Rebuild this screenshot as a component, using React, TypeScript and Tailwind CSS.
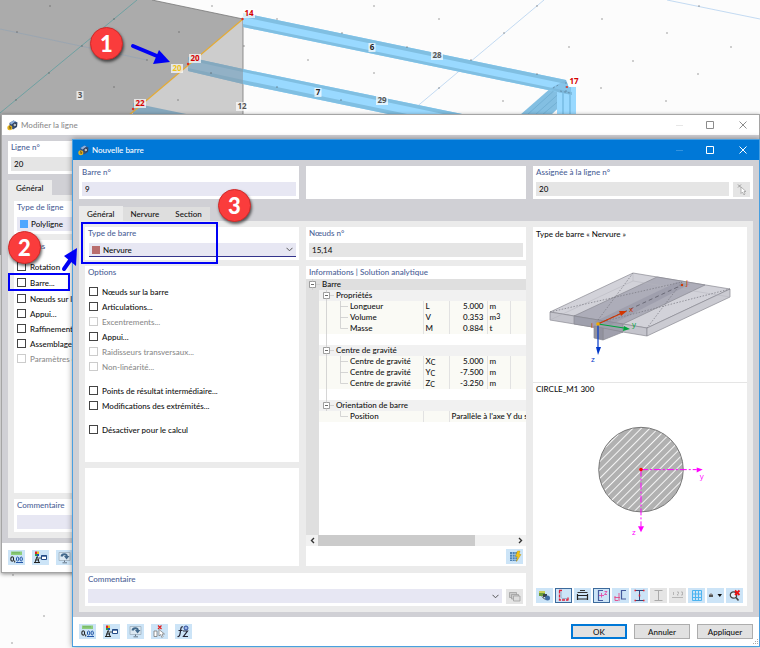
import type { ReactNode } from 'react';
import clsx from 'clsx';

const GRID_DOTS = [
  [50, 6], [114, 19], [17, 32], [179, 32], [82, 46], [147, 60], [49, 73], [211, 73], [114, 87], [16, 100],
  [178, 100], [212, 6], [277, 19], [342, 33], [244, 46], [308, 60], [277, 87], [341, 100], [374, 6], [374, 73],
  [439, 19], [537, 6], [504, 33], [407, 47], [569, 47], [471, 60], [537, 74], [439, 88], [503, 101], [601, 88],
  [666, 101], [602, 19], [633, 61], [667, 33], [731, 47], [698, 74], [699, 6], [13, 575], [44, 616], [12, 643],
];

const MODEL_TAGS = [
  { x: 372, y: 47, text: '6', color: '#222222' },
  { x: 437, y: 55, text: '28', color: '#555555' },
  { x: 318, y: 92, text: '7', color: '#222222' },
  { x: 382, y: 100, text: '29', color: '#555555' },
  { x: 80, y: 95, text: '3', color: '#555555' },
  { x: 242, y: 106, text: '12', color: '#555555' },
  { x: 177, y: 68, text: '20', color: '#f0c419' },
  { x: 249, y: 13, text: '14', color: '#d40000' },
  { x: 195, y: 58, text: '20', color: '#d40000' },
  { x: 140, y: 103, text: '22', color: '#d40000' },
  { x: 574, y: 81, text: '17', color: '#d40000' },
];

function ModelView() {
  return (
    <svg className="absolute left-0 top-0" width="760" height="648" viewBox="0 0 760 648">
      <path d="M0 0H152L243 19L129 115L2 255H0Z" fill="#ababab" />
      <path d="M243 19V116H128Z" fill="#cdcdcd" />
      <path d="M0 29L147 60" stroke="#93a3b3" strokeWidth="0.7" />
      <path d="M137 0L0 113" stroke="#5f9ea0" strokeWidth="0.8" />
      <path d="M544 0L408 114M667 0L760 19" stroke="#bcd6f0" strokeWidth="0.9" />
      <path d="M152 0L243 19V115" fill="none" stroke="#777" strokeWidth="0.8" />
      <path d="M560 80L520 115H551L572 95Z" fill="#83bfe2" />
      <path d="M558 87L527 115M564 89L535 115M568 93L542 115" stroke="#6aa9cf" strokeWidth="0.7" />
      <path d="M557 87H576V115H557Z" fill="#99d9ff" />
      <path d="M563 87V115M570 87V115" stroke="#74b9e2" strokeWidth="1.4" />
      <path d="M243 13L566 80L572 95L243 27Z" fill="#99d9ff" />
      <path d="M243 13L566 80V84L243 17ZM243 24L572 92V95L243 27Z" fill="#80bfe2" />
      <path d="M551 88L566 80L572 95L558 92" fill="#79b6da" fillOpacity="0.6" />
      <path d="M553 88L560 84M566 82V94M560 91L570 93" stroke="#5a7f99" strokeWidth="0.7" strokeDasharray="2 2" />
      <path d="M188 57L243 69V84L188 71Z" fill="#92b1c6" />
      <path d="M188 57L243 69V72L188 60ZM188 68L243 80V84L188 71Z" fill="#84a9bf" />
      <path d="M243 69L467 115H393L243 84Z" fill="#99d9ff" />
      <path d="M243 69L467 115H448L243 72ZM243 80L412 115H393L243 84Z" fill="#80bfe2" />
      <path d="M133 103L191 115H133Z" fill="#86a8bd" />
      <path d="M243 19L128 116" stroke="#e3aa35" strokeWidth="1.2" />
      {GRID_DOTS.map(([x, y]) => (
        <rect key={`${x}-${y}`} x={x - 0.5} y={y - 0.5} width="1" height="1" fill="#444" />
      ))}
      <g fill="#e03020">
        <circle cx="242.500" cy="19" r="1.200" />
        <circle cx="188" cy="64" r="1.200" />
        <circle cx="133" cy="109" r="1.200" />
        <circle cx="567" cy="87" r="1" />
      </g>
      {MODEL_TAGS.map((tag) => (
        <g key={`${tag.text}-${tag.x}`}>
          <rect
            x={tag.x - tag.text.length * 2.5 - 1}
            y={tag.y - 4}
            width={tag.text.length * 5 + 2}
            height="9"
            fill="#ffffff"
            fillOpacity="0.7"
          />
          <text
            x={tag.x}
            y={tag.y + 3}
            textAnchor="middle"
            fontSize="8"
            fontWeight="700"
            fontFamily="'Open Sans', sans-serif"
            fill={tag.color}
          >
            {tag.text}
          </text>
        </g>
      ))}
    </svg>
  );
}

function AppIcon() {
  return (
    <svg className="size-[11px] shrink-0" viewBox="0 0 11 11">
      <path d="M2.500 3L6.500 0.500L10.500 2.500L10 7L6 9.500L2.500 7Z" fill="#35507c" />
      <path d="M2.500 3L6.500 0.500L8.500 1.500L4.500 4.500Z" fill="#8fb0dc" />
      <circle cx="7.800" cy="5" r="1.800" fill="#b7bfca" stroke="#222d40" strokeWidth="0.800" />
      <circle cx="2.800" cy="7.800" r="2.500" fill="#e3b322" />
      <path d="M2 6.500L3.500 6M1.800 8L3.800 7.500L3 9" stroke="#59430b" strokeWidth="0.7" fill="none" />
    </svg>
  );
}

function TitleBar({ title, active = false }: { title: string; active?: boolean }) {
  return (
    <div
      className={clsx(
        'flex h-5 shrink-0 items-center gap-[3px] pl-[5px]',
        active ? 'bg-[#0078d7] text-white' : 'bg-white text-[#8c8c8c]',
      )}
    >
      <AppIcon />
      <h2 className="flex-1 text-[8px]">{title}</h2>
      <button type="button" aria-label="Réduire" className="flex h-5 w-8 items-center justify-center opacity-20">
        <svg width="7" height="7" viewBox="0 0 7 7" stroke="currentColor"><path d="M0 3.500H7" /></svg>
      </button>
      <button type="button" aria-label="Agrandir" className="-ml-1 flex h-5 w-8 items-center justify-center">
        <svg width="8" height="8" viewBox="0 0 8 8" fill="none" stroke="currentColor"><path d="M0.500 0.500H7.500V7.500H0.500Z" /></svg>
      </button>
      <button type="button" aria-label="Fermer" className="-ml-0.5 flex h-5 w-8 items-center justify-center">
        <svg width="8" height="8" viewBox="0 0 8 8" fill="none" stroke="currentColor"><path d="M0.500 0.500L7.500 7.500M7.500 0.500L0.500 7.500" /></svg>
      </button>
    </div>
  );
}

function Group({ label, htmlFor, className, children }: { label?: string; htmlFor?: string; className?: string; children?: ReactNode }) {
  return (
    <div className={clsx('bg-white px-[3px] pb-[3px] pt-px', className)}>
      {label && (
        <label htmlFor={htmlFor} className="mb-[3px] block h-3 leading-[11px] text-[#4c6297]">
          {label}
        </label>
      )}
      {children}
    </div>
  );
}

function Field({ id, value, readOnly = false }: { id: string; value: string; readOnly?: boolean }) {
  return (
    <input
      id={id}
      type="text"
      defaultValue={value}
      readOnly={readOnly}
      className={clsx('block h-[14px] w-full min-w-0 px-[3px] outline-none', readOnly ? 'bg-[#e5e5e5]' : 'bg-[#e7e7f3]')}
    />
  );
}

function Dropdown({ id, value, swatch, underline = false }: { id: string; value: string; swatch?: string; underline?: boolean }) {
  return (
    <div className={clsx('flex h-[14px] min-w-0 flex-1 items-center bg-[#e7e7f3] px-[3px]', underline && 'border-b border-[#33338c]')}>
      {swatch && <span className={clsx('mr-[3px] size-2 shrink-0', swatch)} />}
      <select id={id} defaultValue={value} className="h-full min-w-0 flex-1 appearance-none bg-transparent outline-none">
        <option value={value}>{value}</option>
      </select>
      <svg width="7" height="5" viewBox="0 0 7 5" fill="none" stroke="#555"><path d="M0.500 0.800L3.500 3.800L6.500 0.800" /></svg>
    </div>
  );
}

function Check({ label, disabled = false, className }: { label: string; disabled?: boolean; className?: string }) {
  return (
    <label className={clsx('flex h-[15px] items-center gap-1 whitespace-nowrap', disabled && 'text-[#8c8c8c]', className)}>
      <input
        type="checkbox"
        disabled={disabled}
        className="size-[9px] shrink-0 appearance-none border border-[#444] bg-white checked:bg-[#33338c] disabled:border-[#ccc]"
      />
      {label}
    </label>
  );
}

function Tab({ label, selected = false }: { label: string; selected?: boolean }) {
  return (
    <button
      type="button"
      role="tab"
      aria-selected={selected}
      className={clsx('px-2 leading-none', selected ? 'h-[15px] bg-[#ebebeb]' : 'h-[14px] bg-[#dedede]')}
    >
      {label}
    </button>
  );
}

type IconState = 'normal' | 'selected' | 'disabled';

function IconButton({ label, state = 'normal', children }: { label: string; state?: IconState; children: ReactNode }) {
  return (
    <button
      type="button"
      aria-label={label}
      disabled={state === 'disabled'}
      className={clsx(
        'flex h-[15px] w-[17px] shrink-0 items-center justify-center',
        state === 'normal' && 'bg-[#cce4f7]',
        state === 'selected' && 'border border-[#3c6a9c] bg-[#cce4f7]',
        state === 'disabled' && 'bg-[#e5e5e5]',
      )}
    >
      <svg className="h-[13px] w-[15px] shrink-0" viewBox="0 0 15 13" fill="none">
        {children}
      </svg>
    </button>
  );
}

function DialogTools() {
  return (
    <>
      <IconButton label="Unités et décimales">
        <path d="M2 0.500H13V4H2Z" fill="#8fce7c" />
        <path d="M4 1V2.500M6 1V2.500M8 1V2.500M10 1V2.500" stroke="#4a8f3c" strokeWidth="0.6" />
        <ellipse cx="3.200" cy="8" rx="1.400" ry="2.200" stroke="#222" strokeWidth="1.100" />
        <path d="M5.700 9.500V11.500" stroke="#222" />
        <ellipse cx="8.600" cy="8" rx="1.200" ry="2" stroke="#2456a8" />
        <ellipse cx="12.200" cy="8" rx="1.200" ry="2" stroke="#2456a8" />
        <path d="M7 11.500H14" stroke="#2456a8" />
      </IconButton>
      <IconButton label="Propriétés d'affichage">
        <path d="M2 0.500H4V3H2Z" fill="#e02020" />
        <path d="M4 0.500H6V3H4Z" fill="#e8c020" />
        <path d="M2 3H4V5H2Z" fill="#2a9c3c" />
        <path d="M4 3H6V5H4Z" fill="#2050c0" />
        <path d="M4 5.500L2 11.500M4.500 5.500L6 11.500M2.500 9H6M1 11.500H7" stroke="#222" />
        <path d="M8.500 4.500H13.500V8.500H8.500Z" fill="#fff" stroke="#234a86" />
        <path d="M8.500 5H13.500" stroke="#234a86" strokeWidth="1.400" />
        <path d="M6 7H8" stroke="#222" strokeWidth="0.800" />
      </IconButton>
      <IconButton label="Rotation de la vue">
        <path d="M2 1.500H13V9.500H2Z" fill="#dbe8f2" stroke="#9fb0be" strokeWidth="0.800" />
        <path d="M4.500 5.500C5 2.500 9.500 2.500 9.800 5" stroke="#42698c" strokeWidth="2" />
        <path d="M7 5H12.500L9.500 8.500Z" fill="#42698c" />
        <path d="M7.500 9.500V11M5.500 11.800H10" stroke="#667788" />
      </IconButton>
    </>
  );
}

function TreeToggle({ text }: { text: string }) {
  return (
    <>
      <svg className="mr-[2px] size-[11px] shrink-0" viewBox="0 0 11 11" fill="none" stroke="#888" strokeWidth="0.800">
        <path d="M0.500 2.500H6.500V8.500H0.500Z" fill="#fff" />
        <path d="M2 5.500H5" stroke="#444" />
        <path d="M7 5.500H11M3.500 0V2.500M3.500 8.500V11" stroke="#ccc" />
      </svg>
      {text}
    </>
  );
}

type Row = { name: string; symbol?: string; sub?: string; value: string; unit?: string; exp?: string };

const SECTIONS: { title: string; rows: Row[] }[] = [
  {
    title: 'Propriétés',
    rows: [
      { name: 'Longueur', symbol: 'L', value: '5.000', unit: 'm' },
      { name: 'Volume', symbol: 'V', value: '0.353', unit: 'm', exp: '3' },
      { name: 'Masse', symbol: 'M', value: '0.884', unit: 't' },
    ],
  },
  {
    title: 'Centre de gravité',
    rows: [
      { name: 'Centre de gravité', symbol: 'X', sub: 'C', value: '5.000', unit: 'm' },
      { name: 'Centre de gravité', symbol: 'Y', sub: 'C', value: '-7.500', unit: 'm' },
      { name: 'Centre de gravité', symbol: 'Z', sub: 'C', value: '-3.250', unit: 'm' },
    ],
  },
  { title: 'Orientation de barre', rows: [{ name: 'Position', value: "Parallèle à l'axe Y du système" }] },
];

function SectionRows({ title, rows, last }: { title: string; rows: Row[]; last: boolean }) {
  return (
    <tbody>
      <tr className="h-[11px] bg-[#f1f1f1]">
        <td className="bg-[#dfdfdf] p-0" />
        <th colSpan={5} scope="rowgroup" className="p-0 text-left font-medium">
          <div className="flex h-[11px] items-center pl-1"><TreeToggle text={title} /></div>
        </th>
      </tr>
      {rows.map((row, i) => (
        <tr key={`${row.name}-${i}`} className="h-[11px] bg-[#fafaf5]">
          <td className="bg-[#dfdfdf] p-0" />
          <th scope="row" className="p-0 text-left font-medium">
            <div className="flex h-[11px] items-center whitespace-nowrap">
              <svg className="mr-px h-[11px] w-[30px] shrink-0" viewBox="0 0 30 11" stroke="#ccc" strokeWidth="0.800">
                {!last && <path d="M7.500 0V11" />}
                <path d="M21.500 0V5.500H29" fill="none" />
                {i < rows.length - 1 && <path d="M21.500 5V11" />}
              </svg>
              {row.name}
            </div>
          </th>
          <td className="border-l border-[#e2e2e2] p-0 pl-0.5">
            <div className="flex h-[11px] items-center">
              {row.symbol}
              {row.sub && <span className="self-end text-[7px] leading-[9px]">{row.sub}</span>}
            </div>
          </td>
          {row.unit ? (
            <>
              <td className="border-l border-[#e2e2e2] p-0 pr-[3px] text-right">{row.value}</td>
              <td className="border-l border-[#e2e2e2] p-0 pl-0.5">
                <div className="flex h-[11px] items-center">
                  {row.unit}
                  {row.exp && <span className="self-start text-[7px] leading-[8px]">{row.exp}</span>}
                </div>
              </td>
              <td className="border-l border-[#e2e2e2] p-0" />
            </>
          ) : (
            <td colSpan={3} className="overflow-hidden whitespace-nowrap border-l border-[#e2e2e2] p-0 pl-0.5">{row.value}</td>
          )}
        </tr>
      ))}
      {!last && (
        <tr className="h-[11px]">
          <td className="bg-[#dfdfdf] p-0" />
          <td colSpan={5} className="p-0">
            <svg className="block h-[11px] w-[30px]" viewBox="0 0 30 11" stroke="#ccc" strokeWidth="0.800"><path d="M7.500 0V11" /></svg>
          </td>
        </tr>
      )}
    </tbody>
  );
}

function InfoPanel() {
  return (
    <div className="flex min-h-0 flex-1 flex-col bg-white">
      <h3 className="h-[13px] shrink-0 px-[3px] pt-px leading-[11px] text-[#4c6297]">Informations | Solution analytique</h3>
      <div className="flex min-h-0 flex-1 flex-col overflow-hidden">
        <table className="w-full table-fixed border-collapse leading-[11px]">
          <colgroup>
            <col className="w-[13px]" />
            <col className="w-[104px]" />
            <col className="w-[26px]" />
            <col className="w-[38px]" />
            <col className="w-[23px]" />
            <col />
          </colgroup>
          <thead>
            <tr className="h-[11px] bg-[#dfdfdf]">
              <th colSpan={6} scope="colgroup" className="p-0 text-left font-medium">
                <div className="flex h-[11px] items-center pl-[3px]"><TreeToggle text="Barre" /></div>
              </th>
            </tr>
          </thead>
          {SECTIONS.map((section, i) => (
            <SectionRows key={section.title} title={section.title} rows={section.rows} last={i === SECTIONS.length - 1} />
          ))}
        </table>
        <div className="w-[13px] flex-1 bg-[#dfdfdf]" />
      </div>
      <div className="flex h-[11px] shrink-0 items-stretch bg-[#f1f1f1]">
        <button type="button" aria-label="Défiler à gauche" className="flex w-3 items-center justify-center">
          <svg width="5" height="7" viewBox="0 0 5 7" fill="none" stroke="#333" strokeWidth="1.400"><path d="M4 1L1.500 3.500L4 6" /></svg>
        </button>
        <div className="flex flex-1"><div className="w-4/5 bg-[#cbcbcb]" /></div>
        <button type="button" aria-label="Défiler à droite" className="flex w-3 items-center justify-center">
          <svg width="5" height="7" viewBox="0 0 5 7" fill="none" stroke="#333" strokeWidth="1.400"><path d="M1 1L3.500 3.500L1 6" /></svg>
        </button>
      </div>
      <div className="flex h-5 shrink-0 items-center justify-end px-[3px]">
        <IconButton label="Calculer">
          <path d="M3 2H10V11H3Z" fill="#4f83b5" />
          <path d="M3 4.500H12M3 7H12M3 9.500H10M5.500 2V11.500M8 2V11.500" stroke="#a9cbe8" strokeWidth="0.700" />
          <path d="M10.500 1H13L12 4.500H14L9.500 11.500L10.500 6.500H8.500Z" fill="#f5c518" stroke="#b88a00" strokeWidth="0.400" />
        </IconButton>
      </div>
    </div>
  );
}

function RibDrawing() {
  return (
    <svg className="block h-[142px] w-full shrink-0" viewBox="533 240 214 142" fontFamily="'Open Sans', sans-serif">
      <g stroke="#8a8a92" strokeWidth="0.700" strokeLinejoin="round">
        <path d="M550 312L633 273L730 289L647 328Z" fill="#d2d2d9" />
        <path d="M550 312V320L647 336V328Z" fill="#c4c4cc" />
        <path d="M647 328L730 289V297L647 336Z" fill="#cbcbd2" />
        <path d="M574 316L657 277L705 285L623 324Z" fill="#adadb9" />
        <path d="M574 316V324L623 332V324Z" fill="#9fa0ad" />
        <path d="M603 328L623 332L603 340Z" fill="#a0a0ad" />
        <path d="M594 326L603 328V340L594 338Z" fill="#92929f" />
      </g>
      <path d="M633 273V281L550 320M633 281L730 297" fill="none" stroke="#b4b4bc" strokeWidth="0.500" />
      <path d="M594 322L677 282L690 284L611 325Z" fill="#8f8f9f" fillOpacity="0.45" />
      <path d="M550 312L682 282M598 320L633 273M682 282L647 328M598 323L730 289" fill="none" stroke="#777780" strokeWidth="0.700" strokeDasharray="1.500 1.500" />
      <path d="M598 324L682 285" stroke="#5c5c68" strokeWidth="0.800" strokeDasharray="4 3" />
      <path d="M598 324L622 313" stroke="#d23600" strokeWidth="1.200" />
      <path d="M627 311L621 316L619 311Z" fill="#d23600" />
      <path d="M598 324L624 328" stroke="#00a33c" strokeWidth="1.200" />
      <path d="M630 329L623 331L624 326Z" fill="#00a33c" />
      <path d="M598 324V349" stroke="#0037c8" strokeWidth="1.200" />
      <path d="M598 355L596 347H601Z" fill="#0037c8" />
      <circle cx="598" cy="324" r="1.800" fill="#f2a900" />
      <circle cx="682" cy="285" r="1.200" fill="#d23600" />
      <g fontSize="8" fontWeight="500">
        <text x="629" y="312" fill="#d23600">x</text>
        <text x="632" y="327" fill="#00a33c">y</text>
        <text x="591" y="362" fill="#0037c8">z</text>
        <text x="591" y="328" fill="#d23600">i</text>
        <text x="686" y="285" fill="#d23600">j</text>
      </g>
    </svg>
  );
}

function CircleDrawing() {
  return (
    <svg className="block min-h-0 w-full flex-1" viewBox="533 395 214 194" fontFamily="'Open Sans', sans-serif">
      <defs>
        <pattern id="hatch" width="6" height="6" patternUnits="userSpaceOnUse" patternTransform="rotate(45)">
          <rect width="6" height="6" fill="#b1b1b1" />
          <rect width="1" height="6" fill="#f6f6f6" />
        </pattern>
      </defs>
      <circle cx="641" cy="470" r="42.500" fill="url(#hatch)" stroke="#777" />
      <path d="M641 470H697M641 470V527" stroke="#ff00ff" strokeDasharray="7 2 2 2" />
      <path d="M703 470L697 473V468Z" fill="#ff00ff" />
      <path d="M641 533L638 527H644Z" fill="#ff00ff" />
      <circle cx="641" cy="470" r="1.800" fill="#ff0000" />
      <text x="700" y="479" fontSize="8" fill="#ff00ff">y</text>
      <text x="632" y="536" fontSize="8" fill="#ff00ff">z</text>
    </svg>
  );
}

function SectionTools() {
  return (
    <div className="mb-[3px] flex shrink-0 gap-0.5 pl-[3px]">
      <IconButton label="Éléments visibles">
        <path d="M2 2H8V7H2Z" fill="#6b9e3c" />
        <path d="M2 2H8V4H2Z" fill="#c9cf5a" />
        <path d="M6 5H10V8H6Z" fill="#39464f" />
        <circle cx="10.500" cy="9" r="2.500" fill="#3f6fa8" />
        <path d="M5 7.500L8 10.500" stroke="#333" />
      </IconButton>
      <IconButton label="Contour" state="selected">
        <path d="M3.500 1.500V11H12M3 1.500H6.500M12 11.500V8" stroke="#e0203a" strokeDasharray="3 1" strokeWidth="1.300" />
        <path d="M5 3V7.500C5 9 6 9.500 7 9.500H11" stroke="#7788aa" strokeWidth="0.600" />
      </IconButton>
      <IconButton label="Cotes">
        <path d="M2.500 3.500H12.500M5 1.500H10" stroke="#333" />
        <path d="M2.500 5V11M12.500 5V11M2.500 10H12.500M2.500 6.500H12.500" stroke="#222" strokeWidth="1.200" />
      </IconButton>
      <IconButton label="Axes principaux" state="selected">
        <path d="M9 1.500H4.500V11.500H9" stroke="#445a9c" strokeWidth="1.200" />
        <path d="M5 6.500H10M7.500 4V8.500M10.500 2.500H13L10.500 5.500H13" stroke="#e24aa8" strokeWidth="0.900" />
      </IconButton>
      <IconButton label="Centre de cisaillement">
        <path d="M13 1.500H8.500V10H13" stroke="#445a9c" strokeWidth="1.200" />
        <path d="M6 4V12M1.500 8.500H7M2 7V11.500H5" stroke="#e24a88" strokeWidth="0.900" />
      </IconButton>
      <IconButton label="Points de contrainte">
        <path d="M3 1.500H12M3 11.500H12M7.500 1.500V11.500" stroke="#334a7c" />
        <path d="M2.500 1.500H4M11 1.500H12.500M2.500 11.500H4M11 11.500H12.500M7.500 5.500V7.500" stroke="#e02030" strokeWidth="1.500" />
      </IconButton>
      <IconButton label="Parties de section" state="disabled">
        <path d="M3.500 1.500H11.500M3.500 11.500H11.500M7.500 1.500V11.500" stroke="#aaa" />
      </IconButton>
      <IconButton label="Numérotation" state="disabled">
        <path d="M3.500 3V6M7 3H8.500V4.500L7 6H8.500M11 3H12.500V6H11M2 8.500H13" stroke="#aaa" strokeWidth="0.800" />
      </IconButton>
      <IconButton label="Grille">
        <path d="M3.500 1.500H12.500V11.500H3.500ZM6.500 1.500V11.500M9.500 1.500V11.500M3.500 5H12.500M3.500 8.500H12.500" stroke="#4db4f0" />
      </IconButton>
      <IconButton label="Imprimer">
        <path d="M1 5.500H5V8H1Z" fill="#555" />
        <path d="M2 4.500H4V6H2Z" fill="#888" />
        <path d="M9.500 5H14L11.800 8Z" fill="#111" />
      </IconButton>
      <IconButton label="Réinitialiser le zoom">
        <circle cx="6.500" cy="6" r="3.200" fill="#e5f1fa" stroke="#444" strokeWidth="1.200" />
        <path d="M9 8.500L11.500 11.500" stroke="#444" strokeWidth="1.600" />
        <path d="M8 1.500L12.500 6M12.500 1.500L8 6" stroke="#ee1111" strokeWidth="1.800" />
      </IconButton>
    </div>
  );
}

function LineDialog() {
  return (
    <section aria-label="Modifier la ligne" className="absolute left-px right-0 top-[114px] flex h-[459px] flex-col border border-[#a5a5a5] bg-white shadow-[0_1px_4px_rgba(0,0,0,0.45)]">
      <TitleBar title="Modifier la ligne" />
      <div className="flex min-h-0 flex-1 flex-col bg-[#d0d0d5] px-1.5 pb-[5px] pt-1.5">
        <Group label="Ligne n°" htmlFor="line-no"><Field id="line-no" value="20" readOnly /></Group>
        <div role="tablist" className="mt-1.5 flex items-end"><Tab label="Général" selected /></div>
        <div className="flex min-h-0 flex-1 flex-col gap-1.5 bg-[#ebebeb] p-1.5">
          <Group label="Type de ligne" htmlFor="line-type">
            <Dropdown id="line-type" value="Polyligne" swatch="bg-[#4da6ff]" />
          </Group>
          <Group label="Options" className="min-h-0 flex-1">
            <div className="pt-[3px]">
              <Check label="Rotation" />
              <Check label="Barre..." className="my-px" />
              <Check label="Nœuds sur la ligne" />
              <Check label="Appui..." />
              <Check label="Raffinement..." />
              <Check label="Assemblage..." />
              <Check label="Paramètres de ligne" disabled />
            </div>
          </Group>
          <Group label="Commentaire" htmlFor="line-comment"><Field id="line-comment" value="" /></Group>
        </div>
      </div>
      <div className="flex h-[29px] shrink-0 items-center gap-[7px] px-1.5"><DialogTools /></div>
    </section>
  );
}

function MemberDialog() {
  return (
    <section aria-label="Nouvelle barre" className="absolute bottom-px left-[72px] right-0 top-[139px] flex flex-col border border-[#4a9fe0] bg-white shadow-[0_0_6px_rgba(0,0,0,0.4)]">
      <TitleBar title="Nouvelle barre" active />
      <div className="flex min-h-0 flex-1 flex-col bg-[#d0d0d5] px-1.5 pb-[5px] pt-1.5">
        <div className="grid shrink-0 grid-cols-3 gap-[7px]">
          <Group label="Barre n°" htmlFor="member-no"><Field id="member-no" value="9" /></Group>
          <Group />
          <Group label="Assignée à la ligne n°" htmlFor="assigned-line">
            <div className="flex h-[14px] items-center gap-1">
              <Field id="assigned-line" value="20" readOnly />
              <IconButton label="Sélectionner la ligne" state="disabled">
                <path d="M4 1.500L7 4.500M7 1.500L4 4.500" stroke="#999" />
                <path d="M7 4V10.500L8.500 9L10 12L11 11L10 8.500H12Z" fill="#fff" stroke="#999" strokeWidth="0.700" />
              </IconButton>
            </div>
          </Group>
        </div>
        <div role="tablist" className="mt-[7px] flex shrink-0 items-end">
          <Tab label="Général" selected />
          <Tab label="Nervure" />
          <Tab label="Section" />
        </div>
        <div className="grid min-h-0 flex-1 grid-cols-[107fr_110fr_107fr] grid-rows-[minmax(0,1fr)_auto] gap-[7px] bg-[#ebebeb] p-1.5">
          <div className="flex min-h-0 flex-col gap-1.5">
            <Group label="Type de barre" htmlFor="member-type">
              <div className="flex pl-px"><Dropdown id="member-type" value="Nervure" swatch="bg-[#b96e6e]" underline /></div>
            </Group>
            <Group label="Options" className="min-h-0 flex-1">
              <div className="pl-px pt-0.5">
                <Check label="Nœuds sur la barre" />
                <Check label="Articulations..." />
                <Check label="Excentrements..." disabled />
                <Check label="Appui..." />
                <Check label="Raidisseurs transversaux..." disabled />
                <Check label="Non-linéarité..." disabled />
                <Check label="Points de résultat intermédiaire..." className="mt-[9px]" />
                <Check label="Modifications des extrémités..." />
                <Check label="Désactiver pour le calcul" className="mt-[9px]" />
              </div>
            </Group>
            <Group className="h-[98px] shrink-0" />
          </div>
          <div className="flex min-h-0 flex-col gap-1.5">
            <Group label="Nœuds n°" htmlFor="nodes-no"><Field id="nodes-no" value="15,14" readOnly /></Group>
            <InfoPanel />
          </div>
          <div className="row-span-2 flex min-h-0 flex-col bg-white">
            <h3 className="h-[13px] shrink-0 px-[3px] pt-px leading-3">Type de barre « Nervure »</h3>
            <RibDrawing />
            <h3 className="h-[13px] shrink-0 border-t border-[#e5e5e5] px-[3px] leading-3">CIRCLE_M1 300</h3>
            <CircleDrawing />
            <SectionTools />
          </div>
          <Group label="Commentaire" htmlFor="member-comment" className="col-span-2">
            <div className="flex h-[14px] items-center gap-1">
              <Dropdown id="member-comment" value="" />
              <IconButton label="Commentaires enregistrés" state="disabled">
                <path d="M2.500 2.500H9.500V7.500H2.500Z" fill="#ccc" stroke="#999" strokeWidth="0.700" />
                <path d="M4.500 4.500H11.500V9H4.500Z" fill="#ccc" stroke="#999" strokeWidth="0.700" />
                <path d="M6.500 6H13V11H6.500Z" fill="#ddd" stroke="#999" strokeWidth="0.700" />
              </IconButton>
            </div>
          </Group>
        </div>
      </div>
      <div className="flex h-[29px] shrink-0 items-center gap-[7px] px-1.5">
        <DialogTools />
        <IconButton label="Supprimer la sélection">
          <path d="M6 0.500L9.500 4M9.500 0.500L6 4" stroke="#e02020" strokeWidth="1.200" />
          <path d="M2 6H5V11.500H2Z" fill="#fff" stroke="#777" strokeWidth="0.800" />
          <path d="M7 4.500V11L8.500 9.500L10 12.500L11 11.500L10 9H12.500Z" fill="#fff" stroke="#777" strokeWidth="0.700" />
        </IconButton>
        <IconButton label="Fonctions">
          <path d="M7 2C5 1 5 3 4.500 6C4 9 4 12 1.500 11.500M2.500 5.500H6.500" stroke="#223" strokeWidth="1.200" />
          <path d="M7 6H11.500L7.500 11.500H12" stroke="#223" strokeWidth="1.200" />
          <circle cx="10" cy="3" r="2" fill="#9db8e8" stroke="#2a4a9c" />
        </IconButton>
        <div className="flex-1" />
        <button type="button" className="h-[15px] w-14 border-2 border-[#0078d7] bg-[#e1e1e1] leading-none">OK</button>
        <button type="button" className="h-[15px] w-14 border border-[#adadad] bg-[#e1e1e1] leading-none">Annuler</button>
        <button type="button" className="h-[15px] w-14 border border-[#adadad] bg-[#e1e1e1] leading-none">Appliquer</button>
      </div>
      <svg className="absolute bottom-px right-px size-[6px]" viewBox="0 0 6 6" fill="#aaa">
        <path d="M5 0H6V1H5ZM5 2H6V3H5ZM5 4H6V5H5ZM3 2H4V3H3ZM3 4H4V5H3ZM1 4H2V5H1Z" />
      </svg>
    </section>
  );
}

function StepBadge({ step, className }: { step: number; className: string }) {
  return (
    <div
      className={clsx(
        "absolute flex size-[33px] items-center justify-center rounded-full border border-[#d02a2a] bg-[#fa3c3c] font-['Lato_Black','Lato',sans-serif] text-[22px] font-black leading-none text-white shadow-[1px_2px_3px_rgba(0,0,0,0.6)]",
        className,
      )}
    >
      {step}
    </div>
  );
}

export default function App() {
  return (
    <main className="relative min-h-screen overflow-hidden bg-[#fcfcfc] font-['Lato','Open_Sans',sans-serif] text-[8px] font-medium leading-3 text-[#111]">
      <ModelView />
      <LineDialog />
      <MemberDialog />

      <div className="pointer-events-none absolute left-[81px] top-[222px] h-[42px] w-[137px] border-2 border-[#0000f5]" />
      <div className="pointer-events-none absolute left-2 top-[273px] h-[18px] w-[62px] border-2 border-[#0000f5]" />
      <svg className="pointer-events-none absolute left-0 top-0" width="240" height="300" viewBox="0 0 240 300">
        <g stroke="#0000f5" strokeWidth="4" strokeLinecap="round">
          <path d="M133 46L157 56" />
          <path d="M64 269L71 259" />
        </g>
        <path d="M170 62L153 64L159 50Z" fill="#0000f5" />
        <path d="M77 248L76 266L64 256Z" fill="#0000f5" />
      </svg>
      <StepBadge step={1} className="left-[90px] top-[27px]" />
      <StepBadge step={2} className="left-2 top-[231px]" />
      <StepBadge step={3} className="left-[218px] top-[189px]" />
    </main>
  );
}
